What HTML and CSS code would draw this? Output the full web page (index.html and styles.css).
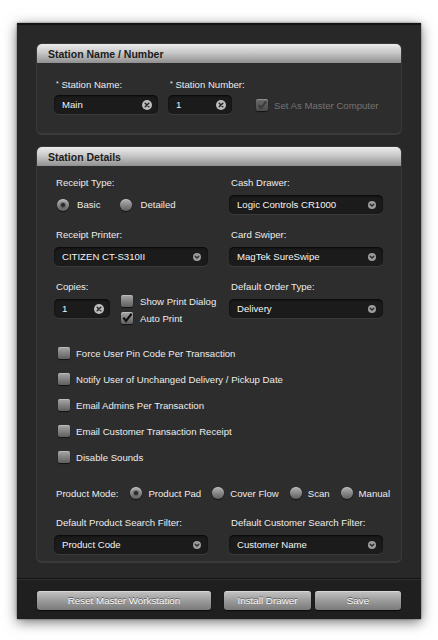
FILE: index.html
```html
<!DOCTYPE html>
<html>
<head>
<meta charset="utf-8">
<link rel="stylesheet" href="styles.css">
</head>
<body>
<div class="window">
  <div class="content">
    <div class="section">
      <div class="sec-head">Station Name / Number</div>
      <div class="sec1-body">
        <div class="field f-name">
          <div class="label tight"><span class="ast">*</span> Station Name:</div>
          <div class="input"><span>Main</span><span class="clear"><svg width="10" height="10" viewBox="0 0 10 10"><circle cx="5" cy="5" r="5" fill="#bdbdbd"/><path d="M3.2 3.2L6.8 6.8M6.8 3.2L3.2 6.8" stroke="#262626" stroke-width="1.5" stroke-linecap="round"/></svg></span></div>
        </div>
        <div class="field f-num">
          <div class="label tight"><span class="ast">*</span> Station Number:</div>
          <div class="input"><span>1</span><span class="clear"><svg width="10" height="10" viewBox="0 0 10 10"><circle cx="5" cy="5" r="5" fill="#bdbdbd"/><path d="M3.2 3.2L6.8 6.8M6.8 3.2L3.2 6.8" stroke="#262626" stroke-width="1.5" stroke-linecap="round"/></svg></span></div>
        </div>
        <div class="check-item master">
          <span class="cb disabled"><svg width="12" height="12" viewBox="0 0 12 12"><path d="M2.6 5.8L5 8.8L10 2.6" stroke="#3a3a3a" stroke-width="2" fill="none"/></svg></span>
          <span>Set As Master Computer</span>
        </div>
      </div>
    </div>

    <div class="section sec2">
      <div class="sec-head">Station Details</div>
      <div class="sec2-body">
        <div class="grid">
          <div class="field">
            <div class="label">Receipt Type:</div>
            <div class="radios">
              <span class="radio on"></span><span class="rlabel">Basic</span>
              <span class="radio"></span><span class="rlabel">Detailed</span>
            </div>
          </div>
          <div class="field">
            <div class="label">Cash Drawer:</div>
            <div class="select"><span>Logic Controls CR1000</span><span class="arrow"><svg width="8" height="8" viewBox="0 0 8 8"><circle cx="4" cy="4" r="4" fill="#9c9c9c"/><path d="M2.2 3.2L4 5L5.8 3.2" stroke="#2a2a2a" stroke-width="1.3" fill="none" stroke-linecap="round"/></svg></span></div>
          </div>
          <div class="field">
            <div class="label">Receipt Printer:</div>
            <div class="select"><span>CITIZEN CT-S310II</span><span class="arrow"><svg width="8" height="8" viewBox="0 0 8 8"><circle cx="4" cy="4" r="4" fill="#9c9c9c"/><path d="M2.2 3.2L4 5L5.8 3.2" stroke="#2a2a2a" stroke-width="1.3" fill="none" stroke-linecap="round"/></svg></span></div>
          </div>
          <div class="field">
            <div class="label">Card Swiper:</div>
            <div class="select"><span>MagTek SureSwipe</span><span class="arrow"><svg width="8" height="8" viewBox="0 0 8 8"><circle cx="4" cy="4" r="4" fill="#9c9c9c"/><path d="M2.2 3.2L4 5L5.8 3.2" stroke="#2a2a2a" stroke-width="1.3" fill="none" stroke-linecap="round"/></svg></span></div>
          </div>
          <div class="copies-row">
            <div class="field f-copies">
              <div class="label">Copies:</div>
              <div class="input"><span>1</span><span class="clear"><svg width="10" height="10" viewBox="0 0 10 10"><circle cx="5" cy="5" r="5" fill="#bdbdbd"/><path d="M3.2 3.2L6.8 6.8M6.8 3.2L3.2 6.8" stroke="#262626" stroke-width="1.5" stroke-linecap="round"/></svg></span></div>
            </div>
            <div class="print-opts">
              <div class="check-item"><span class="cb"></span><span>Show Print Dialog</span></div>
              <div class="check-item"><span class="cb"><svg width="12" height="12" viewBox="0 0 12 12"><path d="M2.4 5.6L5 9L10.6 1.8" stroke="#111" stroke-width="2.2" fill="none"/></svg></span><span>Auto Print</span></div>
            </div>
          </div>
          <div class="field">
            <div class="label">Default Order Type:</div>
            <div class="select"><span>Delivery</span><span class="arrow"><svg width="8" height="8" viewBox="0 0 8 8"><circle cx="4" cy="4" r="4" fill="#9c9c9c"/><path d="M2.2 3.2L4 5L5.8 3.2" stroke="#2a2a2a" stroke-width="1.3" fill="none" stroke-linecap="round"/></svg></span></div>
          </div>
        </div>

        <div class="checklist">
          <div class="check-item"><span class="cb"></span><span>Force User Pin Code Per Transaction</span></div>
          <div class="check-item"><span class="cb"></span><span>Notify User of Unchanged Delivery / Pickup Date</span></div>
          <div class="check-item"><span class="cb"></span><span>Email Admins Per Transaction</span></div>
          <div class="check-item"><span class="cb"></span><span>Email Customer Transaction Receipt</span></div>
          <div class="check-item"><span class="cb"></span><span>Disable Sounds</span></div>
        </div>

        <div class="mode-row">
          <span class="mode-label">Product Mode:</span>
          <span class="radio on"></span><span class="rlabel">Product Pad</span>
          <span class="radio"></span><span class="rlabel">Cover Flow</span>
          <span class="radio"></span><span class="rlabel">Scan</span>
          <span class="radio"></span><span class="rlabel">Manual</span>
        </div>

        <div class="grid filters">
          <div class="field">
            <div class="label">Default Product Search Filter:</div>
            <div class="select"><span>Product Code</span><span class="arrow"><svg width="8" height="8" viewBox="0 0 8 8"><circle cx="4" cy="4" r="4" fill="#9c9c9c"/><path d="M2.2 3.2L4 5L5.8 3.2" stroke="#2a2a2a" stroke-width="1.3" fill="none" stroke-linecap="round"/></svg></span></div>
          </div>
          <div class="field">
            <div class="label">Default Customer Search Filter:</div>
            <div class="select"><span>Customer Name</span><span class="arrow"><svg width="8" height="8" viewBox="0 0 8 8"><circle cx="4" cy="4" r="4" fill="#9c9c9c"/><path d="M2.2 3.2L4 5L5.8 3.2" stroke="#2a2a2a" stroke-width="1.3" fill="none" stroke-linecap="round"/></svg></span></div>
          </div>
        </div>
      </div>
    </div>
  </div>
  <div class="footer">
    <div class="btn btn-reset">Reset Master Workstation</div>
    <div class="btn btn-install">Install Drawer</div>
    <div class="btn btn-save">Save</div>
  </div>
</div>
</body>
</html>
```

FILE: styles.css
```css
html, body { background: #ffffff; }
body {
  margin: 0;
  padding: 23px 17px 21px;
  font-family: "Liberation Sans", Arial, sans-serif;
  font-size: 9.6px;
  color: #ececec;
}
.window {
  background: #282828;
  border-top: 2px solid #141414;
  box-shadow: 0 3px 12px rgba(0,0,0,0.55), 0 0 2px rgba(0,0,0,0.5);
}
.content { padding: 19px 20px 17px; }
.section {
  background: #2d2d2d;
  border-radius: 5px;
  box-shadow: 0 0 0 1px #383838, 0 1px 0 1px #3c3c3c;
}
.sec2 { margin-top: 14px; }
.sec-head {
  height: 19px;
  line-height: 20px;
  padding-left: 11px;
  border-radius: 5px 5px 0 0;
  background: linear-gradient(#ececec, #c8c8c8 45%, #909090);
  color: #1c1c1c;
  font-weight: bold;
  font-size: 10.5px;
}
.sec1-body {
  display: flex;
  align-items: flex-end;
  padding: 16px 17px 19px;
}
.field { display: flex; flex-direction: column; gap: 6px; }
.sec1-body .field { gap: 4px; }
.f-name { width: 104px; flex: none; }
.f-num { width: 64px; margin-left: 10px; flex: none; }
.label { height: 12px; line-height: 12px; padding-left: 2px; white-space: nowrap; }
.ast { font-size: 7px; vertical-align: top; line-height: 9px; }
.input, .select {
  height: 19px;
  box-sizing: border-box;
  border-radius: 5px;
  background: #1b1b1b;
  box-shadow: inset 0 1px 2px rgba(0,0,0,0.8), 0 1px 0 rgba(255,255,255,0.07);
  display: flex;
  align-items: center;
  justify-content: space-between;
  padding: 0 6px 0 8px;
  color: #f4f4f4;
  white-space: nowrap;
}
.select { padding-right: 7px; }
.clear, .arrow { display: flex; }
.check-item {
  display: flex;
  align-items: center;
  gap: 6px;
  height: 12px;
  white-space: nowrap;
}
.master { margin-left: 24px; margin-bottom: 3px; color: #737373; }
.cb {
  width: 12px;
  height: 12px;
  flex: none;
  border-radius: 2px;
  background: linear-gradient(#a8a8a8, #5e5e5e);
  box-shadow: inset 0 1px 0 rgba(255,255,255,0.25), 0 1px 1px rgba(0,0,0,0.6);
  display: flex;
  overflow: visible;
}
.cb svg { overflow: visible; }
.cb.disabled { background: linear-gradient(#6a6a6a, #4a4a4a); }
.sec2-body { padding: 11px 18px 7px 17px; }
.grid {
  display: grid;
  grid-template-columns: 154px 154px;
  column-gap: 21px;
  row-gap: 15px;
}
.radios {
  height: 19px;
  display: flex;
  align-items: center;
  padding-left: 3px;
}
.radio {
  width: 12px;
  height: 12px;
  flex: none;
  border-radius: 50%;
  background: linear-gradient(#b2b2b2, #5e5e5e);
  box-shadow: inset 0 1px 0 rgba(255,255,255,0.25), 0 1px 1px rgba(0,0,0,0.6);
  display: flex;
  align-items: center;
  justify-content: center;
}
.radio.on::after {
  content: "";
  width: 4px;
  height: 4px;
  border-radius: 50%;
  background: #2a2a2a;
  box-shadow: 0 0 0 1px rgba(0,0,0,0.25);
}
.rlabel { margin-left: 8px; margin-right: 20px; }
.copies-row { display: flex; align-items: flex-start; }
.f-copies { width: 56px; flex: none; }
.print-opts {
  margin-left: 11px;
  margin-top: 14px;
  display: flex;
  flex-direction: column;
  gap: 5px;
}
.print-opts .check-item { gap: 7px; }
.checklist {
  margin-top: 21px;
  padding-left: 4px;
  display: flex;
  flex-direction: column;
  gap: 10px;
}
.checklist .check-item { height: 16px; }
.mode-row {
  margin-top: 20px;
  height: 16px;
  display: flex;
  align-items: center;
  padding-left: 2px;
  white-space: nowrap;
}
.mode-label { margin-right: 12px; }
.mode-row .rlabel { margin-left: 6px; margin-right: 11px; }
.mode-row .rlabel:last-child { margin-right: 0; }
.filters { margin-top: 16px; }
.footer {
  background: #1f1f1f;
  border-top: 1px solid #121212;
  box-shadow: inset 0 1px 0 #303030;
  padding: 12px 20px 9px;
  display: flex;
}
.btn {
  height: 19px;
  border-radius: 3px;
  background: linear-gradient(#c4c4c4, #9c9c9c 50%, #7a7a7a);
  color: #fafafa;
  font-size: 9.8px;
  text-shadow: 0 -1px 0 rgba(0,0,0,0.5);
  display: flex;
  align-items: center;
  justify-content: center;
  box-shadow: inset 0 1px 0 rgba(255,255,255,0.35), 0 1px 1px rgba(0,0,0,0.7);
  white-space: nowrap;
}
.btn-reset { width: 174px; }
.btn-install { width: 87px; margin-left: 13px; }
.btn-save { flex: 1; margin-left: 4px; }
```
